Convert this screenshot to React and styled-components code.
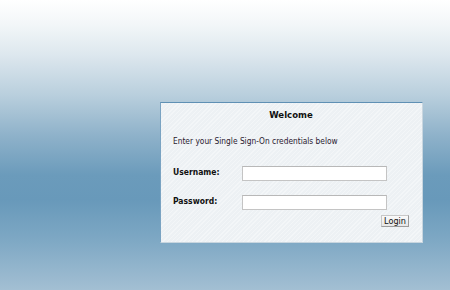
import React from "react";
import styled, { createGlobalStyle } from "styled-components";

const GlobalStyle = createGlobalStyle`
  html, body {
    margin: 0;
    padding: 0;
  }
  body {
    font-family: "DejaVu Sans Condensed", "DejaVu Sans", sans-serif;
  }
`;

const Page = styled.div`
  width: 450px;
  height: 290px;
  box-sizing: border-box;
  padding: 102px 0 0 160px;
  background: linear-gradient(
    to bottom,
    #ffffff 0px,
    #f2f6f8 25px,
    #dde7ee 55px,
    #b9cfdd 95px,
    #8fb2ca 135px,
    #6b9bbb 175px,
    #6899ba 200px,
    #7ea8c4 240px,
    #a3bfd3 290px
  );
`;

const Panel = styled.div`
  width: 263px;
  height: 141px;
  box-sizing: border-box;
  border-top: 1px solid #5f90b4;
  border-left: 1px solid #7aa3c2;
  border-right: 1px solid #c9d6df;
  border-bottom: 1px solid #c9d6df;
  background-color: #edf1f4;
  background-image: repeating-linear-gradient(
    -45deg,
    rgba(255, 255, 255, 0.35) 0px,
    rgba(255, 255, 255, 0.35) 1px,
    transparent 1px,
    transparent 3px
  );
  padding: 5px 13px 0 12px;
  color: #1a1a1a;
  font-size: 8.3px;
`;

const Title = styled.h1`
  margin: 0;
  font-size: 9.5px;
  font-weight: bold;
  text-align: center;
  line-height: 13px;
  color: #111;
`;

const Intro = styled.p`
  margin: 14px 0 0 0;
  line-height: 12px;
  color: #2a2030;
`;

const Form = styled.form`
  margin-top: 19px;
  display: grid;
  grid-template-columns: 69px 145px;
  row-gap: 14px;
  align-items: start;
`;

const Label = styled.label`
  font-weight: bold;
  font-size: 8.5px;
  line-height: 12px;
  color: #111;
`;

const Input = styled.input`
  width: 145px;
  height: 15px;
  box-sizing: border-box;
  margin: 0;
  padding: 0 2px;
  border: 1px solid #c4c4c4;
  border-top-color: #b8b8b8;
  background: #ffffff;
  font-size: 9px;
  outline: none;
`;

const Actions = styled.div`
  display: flex;
  justify-content: flex-end;
  margin-top: 5px;
`;

const Button = styled.button`
  width: 28px;
  height: 12px;
  box-sizing: border-box;
  margin: 0;
  padding: 0;
  font-family: "DejaVu Sans Condensed", "DejaVu Sans", sans-serif;
  font-size: 9px;
  line-height: 10px;
  color: #111;
  background: linear-gradient(to bottom, #fafafa, #e6e6e6);
  border: 1px solid #9c9c9c;
  border-top-color: #c8c8c8;
  border-left-color: #c8c8c8;
  border-radius: 0;
`;

export default function App() {
  return (
    <>
      <GlobalStyle />
      <Page>
        <Panel>
          <Title>Welcome</Title>
          <Intro>Enter your Single Sign-On credentials below</Intro>
          <Form onSubmit={(e) => e.preventDefault()}>
            <Label htmlFor="user">Username:</Label>
            <Input id="user" type="text" />
            <Label htmlFor="pass">Password:</Label>
            <Input id="pass" type="password" />
          </Form>
          <Actions>
            <Button type="submit">Login</Button>
          </Actions>
        </Panel>
      </Page>
    </>
  );
}
